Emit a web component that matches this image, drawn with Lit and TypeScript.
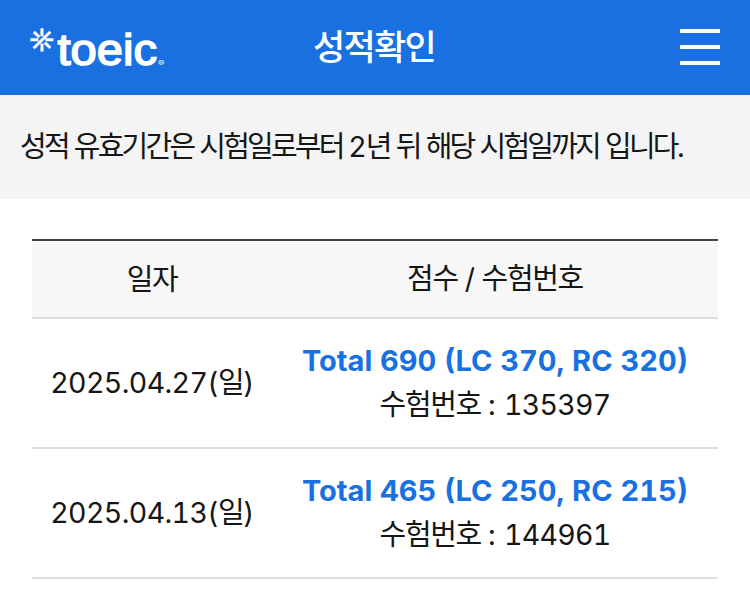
import { LitElement, html, css, svg } from "lit";
import { customElement } from "lit/decorators.js";

interface Result {
  date: string;
  day: string;
  total: number;
  lc: number;
  rc: number;
  id: string;
}

const RESULTS: Result[] = [
  { date: "2025.04.27", day: "일", total: 690, lc: 370, rc: 320, id: "135397" },
  { date: "2025.04.13", day: "일", total: 465, lc: 250, rc: 215, id: "144961" },
];

@customElement("toeic-header")
class ToeicHeader extends LitElement {
  static styles = css`
    :host {
      display: grid;
      grid-template-columns: 1fr auto 1fr;
      height: 95px;
      box-sizing: border-box;
      padding: 0 30px;
      background: #1971e1;
      color: #fff;
    }
    .logo {
      display: block;
      width: 136px;
      height: 95px;
    }
    .word {
      font: 400 44px "Liberation Sans", sans-serif;
      fill: #fff;
      stroke: #fff;
      stroke-width: 1.6px;
    }
    .mark {
      font: 500 8px Inter, "Liberation Sans", sans-serif;
      fill: #fff;
    }
    h1 {
      margin: 0 2px 0 0;
      font: 500 35px/89px "Noto Sans CJK KR", sans-serif;
      letter-spacing: -1.7px;
    }
    .menu {
      justify-self: end;
      display: flex;
      flex-direction: column;
      gap: 12px;
      padding-top: 29px;
      width: 40px;
    }
    .menu i {
      height: 4px;
      background: #fff;
    }
  `;
  render() {
    return html`
      <svg class="logo" viewBox="30 0 136 95">
        ${svg`
          <g stroke="#fff" stroke-width="3" fill="none">
            <path d="M42 28.2V36.2M42 43.4V51.6M30.4 39.8H38.4M45.4 39.8H53.4M33.8 31.8L39.4 37.2M50.4 31.8L33.6 48.2M44.8 42.6L50.4 48"/>
          </g>
          <text class="word" x="57.5" y="64.7" textLength="99.5" lengthAdjust="spacingAndGlyphs">toeic</text>
          <text class="mark" x="158" y="65.5" textLength="6.5" lengthAdjust="spacingAndGlyphs">®</text>`}
      </svg>
      <h1>성적확인</h1>
      <div class="menu"><i></i><i></i><i></i></div>
    `;
  }
}

@customElement("score-table")
class ScoreTable extends LitElement {
  static styles = css`
    :host {
      display: block;
      margin: 40px 32px 0;
      border-top: 2px solid #454143;
    }
    .row {
      display: grid;
      grid-template-columns: 240px 1fr;
      align-items: center;
      text-align: center;
      box-sizing: border-box;
      padding-bottom: 4px;
      height: 130px;
      border-bottom: 2px solid #dedede;
      white-space: nowrap;
    }
    .head {
      height: 78px;
      background: #f7f7f7;
    }
    .ko {
      font-family: "Noto Sans CJK KR", sans-serif;
      font-size: 29px;
      letter-spacing: -1.35px;
      line-height: 44px;
    }
    .num {
      font-family: Inter, sans-serif;
      font-size: 28.5px;
      letter-spacing: -0.6px;
      font-feature-settings: "tnum";
    }
    .id {
      margin-left: 9px;
      letter-spacing: -0.75px;
    }
    .total {
      font: 700 29px/44px Inter, sans-serif;
      font-feature-settings: "tnum";
      color: #1971e1;
      padding-top: 3px;
      margin-bottom: -3px;
    }
  `;
  render() {
    return html`
      <div class="row head">
        <div class="ko">일자</div>
        <div class="ko">점수<span class="num"> / </span>수험번호</div>
      </div>
      ${RESULTS.map(
        (r) => html`<div class="row">
          <div class="ko"><span class="num">${r.date}(</span>${r.day}<span class="num">)</span></div>
          <div>
            <div class="total">Total ${r.total} (LC ${r.lc}, RC ${r.rc})</div>
            <div class="ko">수험번호<span class="num"> :</span><span class="num id">${r.id}</span></div>
          </div>
        </div>`
      )}
    `;
  }
}

@customElement("app-root")
class AppRoot extends LitElement {
  static styles = css`
    :host {
      display: block;
      height: 593px;
      overflow: hidden;
      background: #fff;
      color: #161616;
    }
    .notice {
      height: 104px;
      box-sizing: border-box;
      padding: 0 20px;
      background: #f4f4f4;
      font: 400 29px/99px "Noto Sans CJK KR", sans-serif;
      letter-spacing: -2.8px;
      word-spacing: 2.4px;
      white-space: nowrap;
    }
    .latin {
      font-family: Inter, sans-serif;
      font-size: 28.5px;
      letter-spacing: -0.4px;
    }
  `;
  render() {
    return html`
      <toeic-header></toeic-header>
      <div class="notice">성적 유효기간은 시험일로부터 <span class="latin">2</span>년 뒤 해당 시험일까지 입니다<span class="latin">.</span></div>
      <score-table></score-table>
    `;
  }
}
